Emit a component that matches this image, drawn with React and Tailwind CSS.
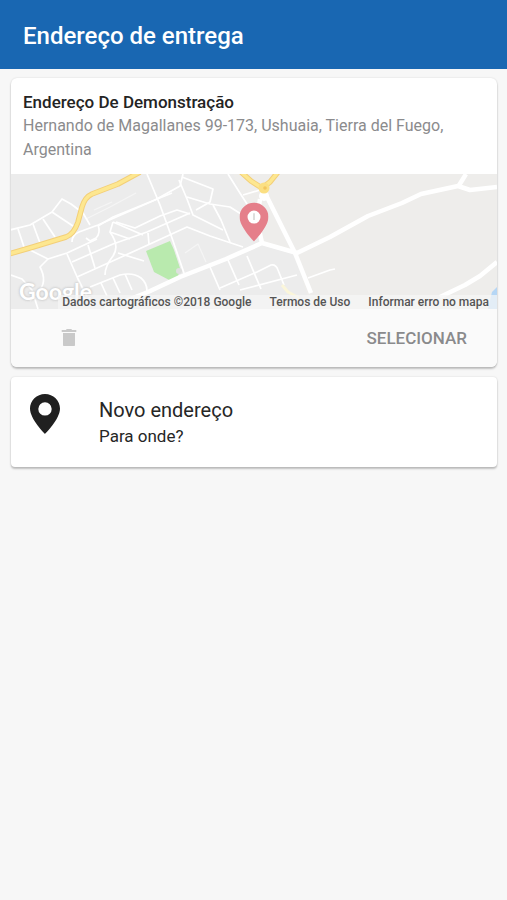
const MINOR_ROADS = [
  // north west blocks
  "M10 230 L30 225 L52 212 L62 199 L71 204 L83 213 L90 225",
  "M18 229 L24 247",
  "M33 224 L40 243",
  "M43 219 L55 237",
  "M52 212 L73 226",
  "M72 242 Q72 235 79 232 L98 225 L155 200 L180 186 L183 174",
  "M98 225 Q101 233 96 238 L90 241 L86 238",
  "M30 250 L48 259 L67 253 L97 239",
  "M98 226 L113 217 L172 193",
  "M67 254 L78 279 L88 299",
  "M88 245 L95 268",
  "M72 262 L113 244 L147 232 L190 213",
  "M77 277 L117 259 L150 244 L187 227 L210 236 L243 247",
  "M113 222 L143 235",
  "M113 222 L110 232 L130 239",
  "M116 222 L135 228 L160 216 L177 210 L190 214",
  "M110 232 Q120 246 113 256 Q105 266 105 275",
  "M118 253 L144 261",
  "M148 233 L149 244",
  "M147 174 L160 205 L172 238 L185 276",
  // around the watermark
  "M48 259 L40 267 Q48 282 38 292 L30 301",
  "M11 275 L22 279 L32 290 L38 309",
  // south centre
  "M90 287 L120 275 Q133 272 141 278 Q147 283 147 291",
  "M101 283 L107 296",
  "M113 278 L120 293",
  "M125 274 L132 290",
  // centre blocks
  "M179 180 L187 199 L193 215 L223 230",
  "M182 177 L213 189 L210 202 L196 210",
  "M187 197 L210 204 L230 207 L241 214",
  "M213 205 L221 220 L230 242",
  "M228 174 L238 190 L247 204",
  "M243 195 L260 190",
  // south east blocks
  "M210 267 L220 290",
  "M228 260 L239 285",
  "M247 256 L261 289",
  "M220 288 L257 272 L271 265 Q276 264 278 270 L284 285",
  "M240 290 L297 275 M308 278 L330 270 L335 269",
];

const FAINT_ROADS = [
  "M86 219 L110 207 L136 193",
  "M94 210 L112 202",
  "M185 253 L198 244 L206 262",
];

const MAIN_ROADS = [
  "M105 309 L148 292 L180 277 L226 259 L262 243 L297 253 L330 237 L368 216 L402 203 L421 194 L458 186 L470 190 L497 187",
  "M458 187 L466 174",
  "M266 195 L277 217 L295 253 L311 293",
  "M260 199 L257 220 L262 243",
  "M440 297 L465 285 L480 276 L497 262",
];

function PinIcon({ className, hole }) {
  return (
    <svg viewBox="0 0 30 40" className={className} aria-hidden="true">
      {hole && <circle cx="15" cy="15" r="8" fill={hole} />}
      <path
        fill="currentColor"
        fillRule="evenodd"
        d="M15 0C6.7 0 0 6.6 0 14.6C0 25.4 15 40 15 40S30 25.4 30 14.6C30 6.6 23.3 0 15 0zM15 8.2a6.7 6.7 0 1 1 0 13.4a6.7 6.7 0 0 1 0-13.4z"
      />
      {hole && <path d="M15 11v7" stroke="#dddddc" strokeWidth="2" />}
    </svg>
  );
}

function TrashIcon() {
  return (
    <svg viewBox="0 0 24 24" className="size-6" fill="currentColor" aria-hidden="true">
      <path d="M6 19c0 .6.4 1 1 1h10c.6 0 1-.4 1-1V7H6v12zM19.3 3.9h-4.1l-1-1H9.8l-1 1H4.7v2h14.6z" />
    </svg>
  );
}

function MapDrawing() {
  return (
    <svg
      viewBox="11 174 486 135"
      preserveAspectRatio="xMidYMid slice"
      className="block h-full w-full"
      fill="none"
      strokeLinejoin="round"
      aria-hidden="true"
    >
      <rect x="11" y="174" width="486" height="135" fill="#eeedeb" />
      <path d="M11 174 H233 L262 243 L295 253 L311 309 H11z" fill="#ececec" />

      {/* park and water */}
      <path d="M146 251 L170 241 L174 250 L180 268 L178 277 L171 281 L154 272z" fill="#b9eaae" />
      <circle cx="179" cy="271" r="3" fill="#dfe0df" />
      <path d="M497 287 L492 292 L488 309 H497z" fill="#b5d6f5" />

      <g stroke="#f5f5f5" strokeWidth="1.2">
        {FAINT_ROADS.map((d) => <path key={d} d={d} />)}
      </g>
      <g stroke="#fff" strokeWidth="1.7">
        {MINOR_ROADS.map((d) => <path key={d} d={d} />)}
      </g>
      <g stroke="#fff" strokeWidth="4.5">
        {MAIN_ROADS.map((d) => <path key={d} d={d} />)}
      </g>
      <circle cx="264" cy="196" r="5" fill="#fff" />

      {/* highway */}
      <g stroke="#f3cf78" strokeWidth="5.5">
        <path d="M9 254 L33 247 L66 237 Q74 234 78 222 L82 207 Q85 197 92 194 L118 184 L140 172" />
        <path d="M241 172 L251 181 L262 188 L270 182 L278 172" />
      </g>
      <g stroke="#fde790" strokeWidth="3.5">
        <path d="M9 254 L33 247 L66 237 Q74 234 78 222 L82 207 Q85 197 92 194 L118 184 L140 172" />
        <path d="M241 172 L251 181 L262 188 L270 182 L278 172" />
      </g>
      <circle cx="264" cy="188" r="5.5" fill="#fbdf82" />
      <circle cx="265" cy="188" r="1.8" fill="#f2c65f" />
      <path d="M282 285 L288 292 L299 298" stroke="#fbf6da" strokeWidth="3" />
    </svg>
  );
}

function AddressCard() {
  return (
    <section className="overflow-hidden rounded-md bg-white shadow-[0_2px_2px_rgba(0,0,0,0.22),0_0_2px_rgba(0,0,0,0.14)]">
      <div className="px-3 pt-3 pb-3">
        <h2 className="text-[17px] leading-6 font-medium text-[#242424]">Endereço De Demonstração</h2>
        <p className="text-[16px] leading-6 text-[#8b8b8d]">
          Hernando de Magallanes 99-173, Ushuaia, Tierra del Fuego, Argentina
        </p>
      </div>

      <div className="relative h-[135px]">
        <MapDrawing />
        <PinIcon
          className="absolute top-7 left-1/2 h-10 w-[29px] -translate-x-1/2 text-[#e57f8a]"
          hole="#fff"
        />
        <span className="absolute bottom-1 left-2 font-['Lato',sans-serif] text-[23px] leading-7 font-bold text-white [text-shadow:0_0_2px_#c4c4c4,0_0_3px_#c8c8c8]">
          Google
        </span>
        <div className="absolute right-0 bottom-0 flex gap-[18px] bg-[#f7f7f7]/70 pr-2 pl-1 text-[12px] leading-[14px] font-medium text-[#555]">
          <span>Dados cartográficos ©2018 Google</span>
          <a href="#termos">Termos de Uso</a>
          <a href="#erro">Informar erro no mapa</a>
        </div>
      </div>

      <div className="flex items-center justify-between bg-[#fafafa] px-[30px] py-[11px]">
        <button type="button" aria-label="Excluir endereço" className="ml-4 py-1.5 text-[#c9c9c9]">
          <TrashIcon />
        </button>
        <button type="button" className="text-[17px] leading-6 font-medium text-[#8a8a8c]">
          SELECIONAR
        </button>
      </div>
    </section>
  );
}

function NewAddress() {
  return (
    <button
      type="button"
      className="flex items-center rounded-sm bg-white px-[19px] py-[17px] text-left shadow-[0_2px_2px_rgba(0,0,0,0.22),0_0_2px_rgba(0,0,0,0.14)]"
    >
      <PinIcon className="mb-4 h-10 w-[30px] text-[#202020]" />
      <span className="ml-[39px] flex flex-col text-[#262626]">
        <span className="text-[20px] leading-7">Novo endereço</span>
        <span className="text-[17px] leading-6">Para onde?</span>
      </span>
    </button>
  );
}

function App() {
  return (
    <div className="min-h-screen bg-[#f7f7f7] font-['Roboto',sans-serif]">
      <header className="bg-[#1967b2] px-[23px] pt-[22px] pb-[18px]">
        <h1 className="text-[24px] leading-[29px] font-medium text-white">Endereço de entrega</h1>
      </header>
      <main className="flex flex-col gap-[10px] py-[9px] pr-[10px] pl-[11px]">
        <AddressCard />
        <NewAddress />
      </main>
    </div>
  );
}

export default App;
